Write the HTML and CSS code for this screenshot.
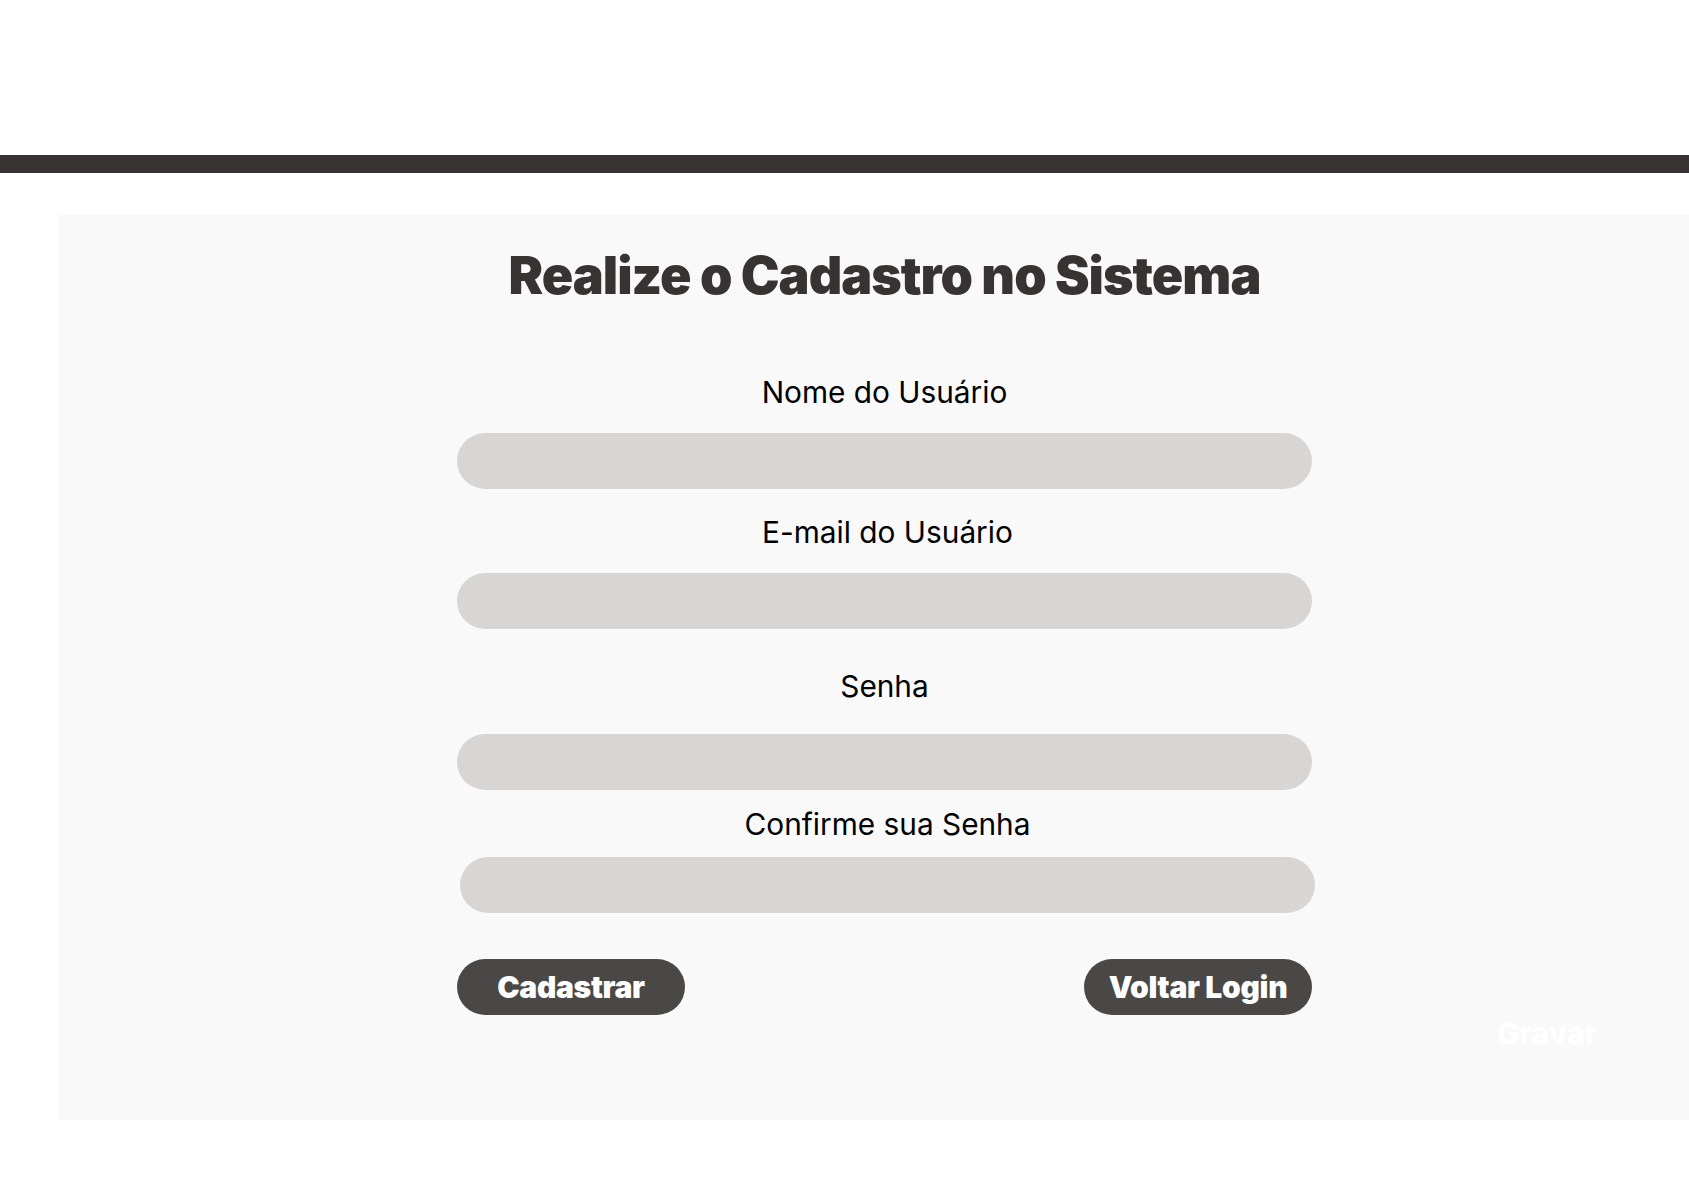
FILE: index.html
```html
<!DOCTYPE html>
<html lang="pt-BR">
<head>
<meta charset="utf-8">
<title>Cadastro</title>
<link rel="stylesheet" href="styles.css">
</head>
<body>
<header class="top">
  <div class="top-space"></div>
  <div class="top-bar"></div>
</header>
<main class="panel">
  <h1 class="title">Realize o Cadastro no Sistema</h1>
  <form class="form">
    <label class="label label-1" for="nome">Nome do Usuário</label>
    <input class="field" id="nome" type="text">
    <label class="label label-2" for="email">E-mail do Usuário</label>
    <input class="field" id="email" type="email">
    <label class="label label-3" for="senha">Senha</label>
    <input class="field" id="senha" type="password">
    <label class="label label-4" for="conf">Confirme sua Senha</label>
    <input class="field field-shift" id="conf" type="password">
    <div class="actions">
      <button type="button" class="btn">Cadastrar</button>
      <button type="button" class="btn">Voltar Login</button>
    </div>
  </form>
  <div class="save-row">
    <button type="button" class="save">Gravar</button>
  </div>
</main>
</body>
</html>
```

FILE: styles.css
```css
* { box-sizing: border-box; }
html, body { margin: 0; padding: 0; background: #ffffff; overflow: hidden; }
body { font-family: "Inter", "Noto Sans", sans-serif; }

.top-space { height: 155px; }
.top-bar { height: 18px; background: #373332; }

.panel {
  margin: 42px 0 0 58px;
  height: 905px;
  background: #f9f9f9;
  padding: 28px 0 0 22px;
  display: flex;
  flex-direction: column;
}

.title {
  margin: 0;
  text-align: center;
  font-size: 52px;
  line-height: 66px;
  font-weight: 900;
  letter-spacing: -1px;
  color: #373332;
}

.form {
  align-self: center;
  width: 855px;
  margin-top: 66px;
  display: flex;
  flex-direction: column;
  align-items: center;
}

.label {
  display: block;
  font-size: 29.8px;
  line-height: 34px;
  font-weight: 400;
  color: #000;
  margin-bottom: 24px;
}
.label-2 { margin-top: 26px; margin-left: 6px; }
.label-3 { margin-top: 40px; margin-bottom: 31px; }
.label-4 { margin-top: 17px; margin-bottom: 16px; margin-left: 6px; }

.field {
  display: block;
  width: 855px;
  height: 56px;
  border: none;
  border-radius: 28px;
  background: #d7d6d5;
  outline: none;
  padding: 0 24px;
  font: inherit;
}
.field-shift { margin-left: 6px; }

.actions {
  width: 100%;
  margin-top: 46px;
  display: flex;
  justify-content: space-between;
}

.btn {
  width: 228px;
  height: 56px;
  border: none;
  border-radius: 28px;
  background: #4a4846;
  color: #ffffff;
  font-family: "Inter", sans-serif;
  font-size: 30px;
  font-weight: 900;
  letter-spacing: -0.3px;
  padding: 0;
}

.save-row {
  display: flex;
  justify-content: flex-end;
  padding-right: 92px;
}
.save {
  border: none;
  background: transparent;
  color: #ffffff;
  font-family: "Inter", sans-serif;
  font-size: 30px;
  line-height: 36px;
  font-weight: 800;
  padding: 0;
}
```
